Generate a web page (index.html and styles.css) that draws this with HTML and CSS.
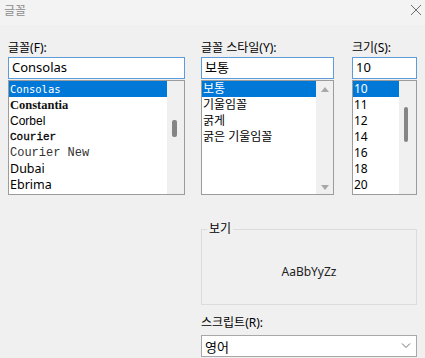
FILE: index.html
```html
<!DOCTYPE html>
<html lang="ko">
<head>
    <meta charset="UTF-8">
    <meta name="viewport" content="width=device-width, initial-scale=1.0">
    <title>글꼴</title>
    <link rel="stylesheet" href="styles.css">
</head>
<body>
    <div class="titlebar">
        <span class="title">글꼴</span>
        <svg class="close" width="12" height="12" viewBox="0 0 12 12">
            <path d="M1 1 L11 11 M11 1 L1 11" stroke="#6e6e6e" stroke-width="1" fill="none"/>
        </svg>
    </div>

    <div class="dialog">
        <div class="field">
            <div class="label">글꼴(F):</div>
            <div class="edit">Consolas</div>
            <div class="listbox">
                <ul class="items">
                    <li class="selected f-consolas">Consolas</li>
                    <li class="f-constantia">Constantia</li>
                    <li class="f-corbel">Corbel</li>
                    <li class="f-courier">Courier</li>
                    <li class="f-couriernew">Courier New</li>
                    <li class="f-dubai">Dubai</li>
                    <li class="f-ebrima">Ebrima</li>
                </ul>
                <div class="scrollbar">
                    <span class="thumb font-thumb"></span>
                </div>
            </div>
        </div>

        <div class="field">
            <div class="label">글꼴 스타일(Y):</div>
            <div class="edit">보통</div>
            <div class="listbox">
                <ul class="items small">
                    <li class="selected">보통</li>
                    <li>기울임꼴</li>
                    <li>굵게</li>
                    <li>굵은 기울임꼴</li>
                </ul>
                <div class="scrollbar arrows">
                    <span class="arrow up"></span>
                    <span class="arrow down"></span>
                </div>
            </div>
        </div>

        <div class="field size-field">
            <div class="label">크기(S):</div>
            <div class="edit">10</div>
            <div class="listbox">
                <ul class="items small">
                    <li class="selected">10</li>
                    <li>11</li>
                    <li>12</li>
                    <li>14</li>
                    <li>16</li>
                    <li>18</li>
                    <li>20</li>
                </ul>
                <div class="scrollbar">
                    <span class="thumb size-thumb"></span>
                </div>
            </div>
        </div>

        <div class="lower">
            <fieldset class="preview">
                <legend>보기</legend>
                <div class="sample">AaBbYyZz</div>
            </fieldset>
            <div class="label script-label">스크립트(R):</div>
            <div class="select">
                <span>영어</span>
                <svg width="10" height="6" viewBox="0 0 10 6">
                    <path d="M1 0.5 L5 4.5 L9 0.5" stroke="#6e6e6e" stroke-width="1" fill="none"/>
                </svg>
            </div>
        </div>
    </div>
</body>
</html>
```

FILE: styles.css
```css
body {
    margin: 0;
    width: 425px;
    height: 358px;
    overflow: hidden;
    background-color: #f0f0f0;
    font-family: "Noto Sans", "Noto Sans CJK KR", sans-serif;
    font-size: 12px;
    color: #000;
}
.titlebar {
    height: 25px;
    background-color: #f3f3f3;
    display: flex;
    align-items: center;
    justify-content: space-between;
    padding: 0 3px 4px 4px;
    box-sizing: border-box;
}
.title {
    color: #8c8c8c;
    font-size: 12px;
    line-height: 16px;
}
.close {
    margin-top: -2px;
}
.dialog {
    display: grid;
    grid-template-columns: 177px 133px 67px;
    column-gap: 16px;
    padding: 15px 8px 0;
}
.size-field {
    padding-left: 2px;
}
.label {
    line-height: 16px;
    height: 17px;
    white-space: nowrap;
}
.edit {
    height: 22px;
    box-sizing: border-box;
    border: 1px solid #5e9bd8;
    background: #fff;
    padding: 0 3px;
    line-height: 19px;
    font-size: 13px;
}
.listbox {
    margin-top: 1px;
    height: 115px;
    box-sizing: border-box;
    border: 1px solid #9c9c9c;
    background: #fff;
    display: flex;
}
.items {
    list-style: none;
    margin: 0;
    padding: 0;
    flex: 1;
    overflow: hidden;
}
.items li {
    height: 16px;
    line-height: 16px;
    padding-left: 1px;
    font-size: 13px;
    white-space: nowrap;
    overflow: hidden;
}
.items.small li {
    font-size: 12px;
}
.items li.selected {
    background-color: #0078d7;
    color: #fff;
}
.scrollbar {
    width: 17px;
    background-color: #f0f0f0;
    position: relative;
}
.thumb {
    position: absolute;
    left: 5px;
    width: 5px;
    border-radius: 2px;
    background-color: #858585;
}
.font-thumb {
    top: 39px;
    height: 17px;
}
.size-thumb {
    top: 26px;
    height: 35px;
    width: 4px;
}
.arrows {
    display: flex;
    flex-direction: column;
    justify-content: space-between;
    align-items: center;
    padding: 6px 0 4px;
    box-sizing: border-box;
}
.arrow {
    width: 0;
    height: 0;
    border-left: 4px solid transparent;
    border-right: 4px solid transparent;
}
.arrow.up {
    border-bottom: 5px solid #a8a8a8;
}
.arrow.down {
    border-top: 5px solid #a8a8a8;
}

/* font list previews */
.items li.f-consolas {
    font-family: "DejaVu Sans Mono", monospace;
    font-size: 10.5px;
}
.items li.f-constantia {
    font-family: "Liberation Serif", serif;
    font-weight: bold;
    font-size: 12.5px;
    color: #111;
}
.items li.f-corbel {
    font-family: "Liberation Sans", sans-serif;
    font-size: 12px;
}
.items li.f-courier {
    font-family: "Liberation Mono", monospace;
    font-size: 11px;
    -webkit-text-stroke: 0.3px #000;
}
.items li.f-couriernew {
    font-family: "Liberation Mono", monospace;
    font-size: 12px;
    color: #333;
}
.items li.f-dubai, .items li.f-ebrima {
    font-family: "Noto Sans", sans-serif;
    font-size: 12.5px;
}

.lower {
    grid-column: 2 / 4;
    margin-top: 27px;
}
.preview {
    margin: 0;
    padding: 0 0 0 5px;
    border: 1px solid #dcdcdc;
    height: 83px;
    box-sizing: border-box;
    min-width: 0;
}
.preview legend {
    padding: 0 2px;
    line-height: 14px;
}
.sample {
    height: 60px;
    padding-top: 10px;
    box-sizing: border-box;
    display: flex;
    align-items: center;
    justify-content: center;
    padding-right: 5px;
    color: #222;
}
.script-label {
    margin-top: 10px;
    height: 20px;
}
.select {
    height: 22px;
    box-sizing: border-box;
    border: 1px solid #a8a8a8;
    background: #fff;
    display: flex;
    align-items: center;
    justify-content: space-between;
    padding: 0 5px 0 3px;
    font-size: 13px;
}
```
